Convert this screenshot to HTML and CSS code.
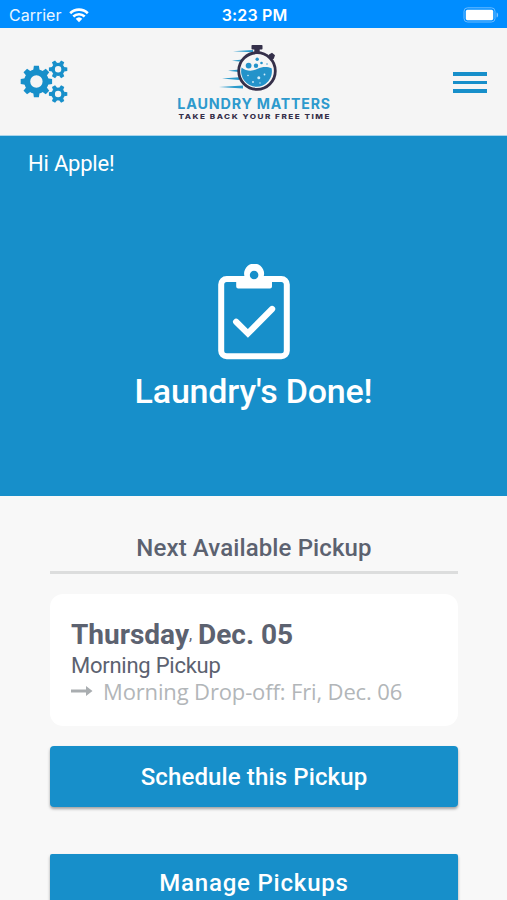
FILE: index.html
```html
<!DOCTYPE html>
<html lang="en">
<head>
    <meta charset="UTF-8">
    <meta name="viewport" content="width=device-width, initial-scale=1.0">
    <title>Laundry Matters</title>
    <link rel="stylesheet" href="styles.css">
</head>
<body>

    <!-- Status Bar -->
    <div class="status-bar">
        <div class="carrier">
            <span>Carrier</span>
            <svg class="wifi" width="20" height="15" viewBox="0 0 20 15">
                <g fill="none" stroke="#fff" stroke-width="2.6">
                    <path d="M1.2 5.2a12.6 12.6 0 0 1 17.6 0"/>
                    <path d="M4.3 8.5a8.2 8.2 0 0 1 11.4 0"/>
                </g>
                <path fill="#fff" d="M6.7 10.8a4.8 4.8 0 0 1 6.6 0L10 14.2z"/>
            </svg>
        </div>
        <span class="clock">3:23 PM</span>
        <svg class="battery" width="37" height="16" viewBox="0 0 37 16">
            <rect x="1" y=".8" width="31" height="14.2" rx="3.5" fill="none" stroke="#6bbbff"/>
            <rect x="2.8" y="2.8" width="27.4" height="10.4" rx="1.6" fill="#fff"/>
            <path d="M33.6 5.4c2 .6 2 4.4 0 5z" fill="#7fc4ff"/>
        </svg>
    </div>

    <!-- Header -->
    <header class="header">
        <svg class="gears" width="48" height="44" viewBox="20.3 59.5 48 44">
            <defs>
                <g id="tooth"><path d="M-3.2-11l.7-4.7h5l.7 4.7z"/></g>
                <g id="small-tooth"><path d="M-2.3-6l.5-3.2h3.6l.5 3.2z"/></g>
                <g id="small-gear">
                    <circle r="4.9" fill="none" stroke="#178fca" stroke-width="3.4"/>
                    <use href="#small-tooth" transform="rotate(30)"/>
                    <use href="#small-tooth" transform="rotate(90)"/>
                    <use href="#small-tooth" transform="rotate(150)"/>
                    <use href="#small-tooth" transform="rotate(210)"/>
                    <use href="#small-tooth" transform="rotate(270)"/>
                    <use href="#small-tooth" transform="rotate(330)"/>
                </g>
            </defs>
            <g fill="#178fca">
                <g transform="translate(36.7 81)">
                    <circle r="9.2" fill="none" stroke="#178fca" stroke-width="6"/>
                    <use href="#tooth"/>
                    <use href="#tooth" transform="rotate(45)"/>
                    <use href="#tooth" transform="rotate(90)"/>
                    <use href="#tooth" transform="rotate(135)"/>
                    <use href="#tooth" transform="rotate(180)"/>
                    <use href="#tooth" transform="rotate(225)"/>
                    <use href="#tooth" transform="rotate(270)"/>
                    <use href="#tooth" transform="rotate(315)"/>
                </g>
                <use href="#small-gear" transform="translate(58.4 68.8)"/>
                <use href="#small-gear" transform="translate(58.4 93.5)"/>
            </g>
        </svg>

        <svg class="logo" width="156" height="78" viewBox="176 43 156 78">
            <!-- speed lines -->
            <g fill="#2a9acb">
                <path d="M233 51.2l20-1.2v2.2z"/>
                <path d="M232 60.8l10-1.2v2.2z"/>
                <path d="M228 70.8l11-1.2v2.4z"/>
                <path d="M222 78.6l17-1.3v2.6z"/>
                <path d="M219 87l24-1.5v3z"/>
            </g>
            <!-- stopwatch -->
            <g fill="#35304a">
                <rect x="251.5" y="45" width="11" height="4.6" rx=".8"/>
                <rect x="254.3" y="48" width="5.4" height="5"/>
                <path d="M269 54.5l3-1.8 3 2.6-1.2 3.4-2.2.8-3-3z"/>
            </g>
            <circle cx="257" cy="71" r="18.3" fill="#f5f5f5" stroke="#35304a" stroke-width="2.8"/>
            <g fill="#2493ca">
                <path d="M241.6 67.5c5 4 11 4 16 1.3 5-2.6 10-2.3 14-.5a15.4 15.4 0 1 1-30-.8z"/>
                <circle cx="248.6" cy="65.6" r="2.9"/>
                <circle cx="256" cy="65.7" r="2.2"/>
                <circle cx="257.2" cy="59.2" r="1.7"/>
                <circle cx="261.5" cy="63" r="1.3"/>
                <circle cx="267" cy="64" r=".7"/>
            </g>
            <g fill="#d5eefa">
                <circle cx="258.8" cy="77.7" r="1.5"/>
                <circle cx="248" cy="75.5" r=".8"/>
                <circle cx="253" cy="82" r=".9"/>
                <circle cx="264.5" cy="74.5" r=".9"/>
                <circle cx="260" cy="83" r=".7"/>
            </g>
            <text class="logo-name" x="177.3" y="109" textLength="75.5" lengthAdjust="spacingAndGlyphs">LAUNDRY</text>
            <text class="logo-name" x="256.8" y="109" textLength="74" lengthAdjust="spacingAndGlyphs">MATTERS</text>
            <text class="logo-tagline" x="178.5" y="118.6" textLength="152.5" lengthAdjust="spacingAndGlyphs">TAKE BACK YOUR FREE TIME</text>
        </svg>

        <div class="menu">
            <span></span>
            <span></span>
            <span></span>
        </div>
    </header>

    <!-- Current Order Status -->
    <section class="hero">
        <p class="greeting">Hi Apple!</p>
        <svg class="clipboard" width="72" height="96" viewBox="217.5 264 72 96">
            <rect x="220.7" y="279" width="65.6" height="77.3" rx="5.5" fill="none" stroke="#fff" stroke-width="6"/>
            <path d="M235.7 276h8.2a10 10 0 1 1 19.4 0h8.2v10.4a2 2 0 0 1-2 2h-31.8a2 2 0 0 1-2-2z" fill="#fff"/>
            <circle cx="253.6" cy="275" r="4.3" fill="#178fca"/>
            <path d="M235.6 321.8l11.8 11.6 24.2-24.4" fill="none" stroke="#fff" stroke-width="6.2" stroke-linecap="round"/>
        </svg>
        <h1>Laundry's Done!</h1>
    </section>

    <!-- Next Pickup -->
    <main class="content">
        <h2>Next Available Pickup</h2>
        <div class="card">
            <div class="pickup-date"><span class="day">Thursday</span><span class="comma">,</span><span>Dec. 05</span></div>
            <div class="pickup-time">Morning Pickup</div>
            <div class="dropoff">
                <svg width="22" height="12" viewBox="0 0 22 12">
                    <path d="M0 4.6h15V1l6.5 5-6.5 5V7.4H0z" fill="#a9adb0"/>
                </svg>
                <span>Morning Drop-off: Fri, Dec. 06</span>
            </div>
        </div>
        <button class="schedule-btn">Schedule this Pickup</button>
        <button class="manage-btn">Manage Pickups</button>
    </main>

</body>
</html>
```
FILE: styles.css
```css
body {
    font-family: Roboto, sans-serif;
    margin: 0;
    padding: 0;
    height: 900px;
    overflow: hidden;
    background: #f8f8f8;
    color: #5c6270;
}

.status-bar {
    display: grid;
    grid-template-columns: 1fr auto 1fr;
    align-items: center;
    box-sizing: border-box;
    height: 28px;
    padding: 2px 7px 0 9px;
    background: #008dff;
    color: #e9f6ff;
    font-family: Inter, sans-serif;
    font-size: 16px;
}

.carrier {
    display: flex;
    align-items: center;
    gap: 8px;
}

.clock {
    font-weight: 600;
    letter-spacing: 0.15px;
    color: white;
}

.battery {
    justify-self: end;
}

.header {
    display: grid;
    grid-template-columns: 1fr auto 1fr;
    align-items: center;
    box-sizing: border-box;
    height: 108px;
    padding: 0 20px;
    background: #f5f5f5;
    border-bottom: 1px solid #a9d5ec;
}

.logo-name {
    font-family: Inter, sans-serif;
    font-size: 14px;
    font-weight: 700;
    letter-spacing: 0.8px;
    fill: #2d9acd;
}

.logo-tagline {
    font-family: Inter, sans-serif;
    font-size: 6.4px;
    font-weight: 800;
    letter-spacing: 1.2px;
    fill: #35304a;
}

.menu {
    display: flex;
    flex-direction: column;
    justify-self: end;
    gap: 5px;
    width: 34px;
    padding-top: 2px;
}

.menu span {
    height: 3.5px;
    background: #178fca;
}

.hero {
    display: flex;
    flex-direction: column;
    align-items: center;
    box-sizing: border-box;
    height: 360px;
    padding-top: 14px;
    background: #178fca;
    color: white;
}

.greeting {
    align-self: flex-start;
    margin: 0 0 86px 28px;
    font-size: 22px;
    letter-spacing: -0.2px;
    line-height: 28px;
}

h1 {
    margin: 10px 0 0;
    font-size: 34px;
    font-weight: 500;
    letter-spacing: -0.2px;
    line-height: 42px;
}

.content {
    display: flex;
    flex-direction: column;
    padding: 36px 49px 0 50px;
}

h2 {
    margin: 0 0 20px;
    padding-bottom: 7px;
    border-bottom: 3px solid #dcdddd;
    font-size: 24px;
    font-weight: 500;
    letter-spacing: 0.12px;
    line-height: 32px;
    text-align: center;
}

.card {
    box-sizing: border-box;
    height: 132px;
    padding: 23px 21px 0;
    background: white;
    border-radius: 13px;
}

.pickup-date {
    display: flex;
    font-size: 28px;
    font-weight: 700;
    line-height: 36px;
}

.comma {
    width: 9px;
    font-size: 16px;
    font-weight: 400;
}

.pickup-time {
    font-size: 22px;
    letter-spacing: -0.25px;
    line-height: 26px;
}

.dropoff {
    display: flex;
    align-items: center;
    gap: 10px;
    color: #b2b6b9;
    font-family: "Open Sans", sans-serif;
    font-size: 22px;
    letter-spacing: -0.14px;
    line-height: 24px;
    white-space: nowrap;
}

.schedule-btn,
.manage-btn {
    height: 61px;
    margin-top: 20px;
    padding: 0;
    border: none;
    border-radius: 4px;
    background: #178fca;
    box-shadow: 0 2px 3px rgba(0, 0, 0, 0.35);
    color: white;
    font-family: Roboto, sans-serif;
    font-size: 24px;
    font-weight: 500;
    letter-spacing: 0.12px;
}

.manage-btn {
    flex-shrink: 0;
    height: 57px;
    margin-top: 47px;
    border-radius: 2px;
    letter-spacing: 0.8px;
}
```
